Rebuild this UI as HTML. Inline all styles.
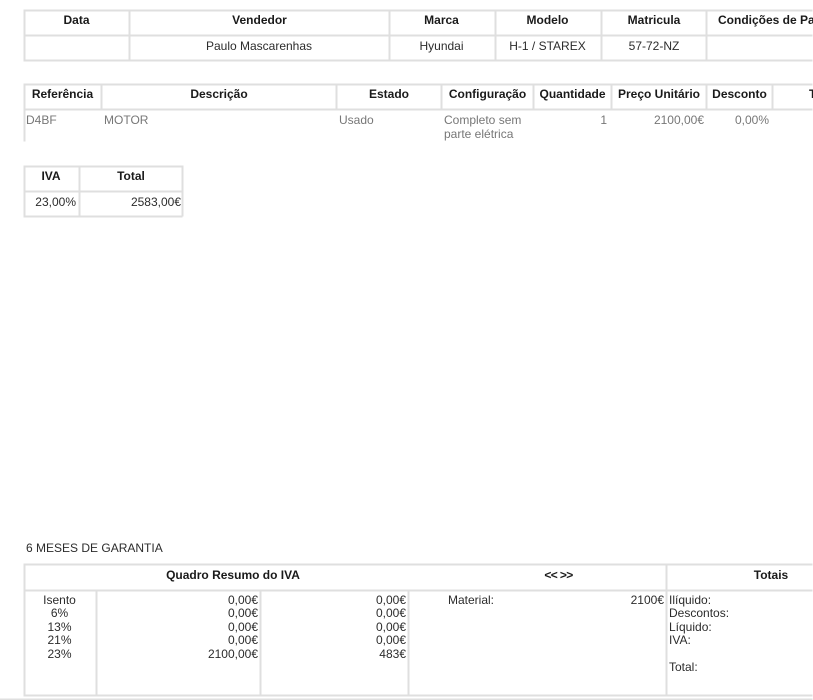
<!DOCTYPE html>
<html>
<head>
<meta charset="utf-8">
<style>
html,body{margin:0;padding:0;background:#fff;width:813px;height:700px;overflow:hidden}
#p{position:relative;width:813px;height:700px;overflow:hidden;font-family:"Liberation Sans",Arial,sans-serif;font-size:12px;color:#2c2c2c;filter:blur(.3px)}
.h,.v{position:absolute;background:#dfdfdf;transform:translate(-.5px,-.5px)}
.h{height:1.5px}
.v{width:1.5px}
.w{width:2px}
.t{position:absolute;white-space:nowrap;line-height:14px}
.b{font-weight:bold;color:#1a1a1a;text-align:center}
.c{text-align:center}
.r{text-align:right}
.g{color:#777}
</style>
</head>
<body>
<div id="p">
<!-- table 1 lines -->
<div class="h" style="left:24px;top:10px;width:789px"></div>
<div class="h" style="left:24px;top:35px;width:789px"></div>
<div class="h" style="left:24px;top:60px;width:789px"></div>
<div class="v" style="left:24px;top:10px;height:51px"></div>
<div class="v" style="left:129px;top:10px;height:51px"></div>
<div class="v" style="left:389px;top:10px;height:51px"></div>
<div class="v" style="left:495px;top:10px;height:51px"></div>
<div class="v" style="left:601px;top:10px;height:51px"></div>
<div class="v" style="left:706px;top:10px;height:51px"></div>
<div class="t b" style="left:24px;width:105px;top:13px">Data</div>
<div class="t b" style="left:130px;width:259px;top:13px">Vendedor</div>
<div class="t b" style="left:389px;width:105px;top:13px">Marca</div>
<div class="t b" style="left:495px;width:105px;top:13px">Modelo</div>
<div class="t b" style="left:602px;width:104px;top:13px">Matricula</div>
<div class="t b" style="left:718px;top:13px">Condições de Pa</div>
<div class="t c" style="left:130px;width:258px;top:39px">Paulo Mascarenhas</div>
<div class="t c" style="left:389px;width:105px;top:39px">Hyundai</div>
<div class="t c" style="left:495px;width:105px;top:39px">H-1 / STAREX</div>
<div class="t c" style="left:602px;width:104px;top:39px">57-72-NZ</div>
<!-- table 2 lines -->
<div class="h" style="left:24px;top:84px;width:789px"></div>
<div class="h" style="left:24px;top:109px;width:789px"></div>
<div class="v" style="left:24px;top:84px;height:58px"></div>
<div class="v" style="left:101px;top:84px;height:26px"></div>
<div class="v" style="left:336px;top:84px;height:26px"></div>
<div class="v" style="left:441px;top:84px;height:26px"></div>
<div class="v" style="left:533px;top:84px;height:26px"></div>
<div class="v" style="left:611px;top:84px;height:26px"></div>
<div class="v" style="left:706px;top:84px;height:26px"></div>
<div class="v" style="left:772px;top:84px;height:26px"></div>
<div class="t b" style="left:25px;width:75px;top:87px">Referência</div>
<div class="t b" style="left:102px;width:234px;top:87px">Descrição</div>
<div class="t b" style="left:337px;width:104px;top:87px">Estado</div>
<div class="t b" style="left:442px;width:91px;top:87px">Configuração</div>
<div class="t b" style="left:534px;width:77px;top:87px">Quantidade</div>
<div class="t b" style="left:612px;width:94px;top:87px">Preço Unitário</div>
<div class="t b" style="left:707px;width:65px;top:87px">Desconto</div>
<div class="t b" style="left:809px;top:87px">T</div>
<div class="t g" style="left:26px;top:113px">D4BF</div>
<div class="t g" style="left:104px;top:113px">MOTOR</div>
<div class="t g" style="left:339px;top:113px">Usado</div>
<div class="t g" style="left:444px;top:113px">Completo sem<br>parte elétrica</div>
<div class="t g r" style="left:534px;width:73px;top:113px">1</div>
<div class="t g r" style="left:612px;width:92px;top:113px">2100,00€</div>
<div class="t g r" style="left:707px;width:62px;top:113px">0,00%</div>
<!-- table 3 lines -->
<div class="h" style="left:24px;top:166px;width:159px"></div>
<div class="h" style="left:24px;top:191px;width:159px"></div>
<div class="h" style="left:24px;top:216px;width:159px"></div>
<div class="v" style="left:24px;top:166px;height:51px"></div>
<div class="v" style="left:79px;top:166px;height:51px"></div>
<div class="v" style="left:182px;top:166px;height:51px"></div>
<div class="t b" style="left:24px;width:54px;top:169px">IVA</div>
<div class="t b" style="left:80px;width:102px;top:169px">Total</div>
<div class="t r" style="left:25px;width:51px;top:195px">23,00%</div>
<div class="t r" style="left:80px;width:101px;top:195px">2583,00€</div>
<!-- footer -->
<div class="t" style="left:26px;top:541px">6 MESES DE GARANTIA</div>
<div class="h" style="left:24px;top:564px;width:789px;height:2px"></div>
<div class="h" style="left:24px;top:590px;width:789px;height:2px"></div>
<div class="h" style="left:24px;top:695px;width:789px;height:2px"></div>
<div class="h" style="left:0;top:699px;width:813px"></div>
<div class="v w" style="left:24px;top:564px;height:132px"></div>
<div class="v w" style="left:95.5px;top:590px;height:106px"></div>
<div class="v w" style="left:259.5px;top:590px;height:106px"></div>
<div class="v w" style="left:407.5px;top:590px;height:106px"></div>
<div class="v w" style="left:666px;top:564px;height:132px"></div>
<div class="t b" style="left:24px;width:418px;top:568px">Quadro Resumo do IVA</div>
<div class="t b" style="left:452px;width:213px;letter-spacing:-.6px;top:568px">&lt;&lt; &gt;&gt;</div>
<div class="t b" style="left:667px;width:208px;top:568px">Totais</div>
<div class="t c" style="left:24px;width:71px;top:594px;line-height:13.4px">Isento<br>6%<br>13%<br>21%<br>23%</div>
<div class="t r" style="left:97px;width:161px;top:594px;line-height:13.4px">0,00€<br>0,00€<br>0,00€<br>0,00€<br>2100,00€</div>
<div class="t r" style="left:261px;width:145px;top:594px;line-height:13.4px">0,00€<br>0,00€<br>0,00€<br>0,00€<br>483€</div>
<div class="t" style="left:448px;top:594px;line-height:13.4px">Material:</div>
<div class="t r" style="left:600px;width:64px;top:594px;line-height:13.4px">2100€</div>
<div class="t" style="left:669px;top:594px;line-height:13.4px">Ilíquido:<br>Descontos:<br>Líquido:<br>IVA:<br><br>Total:</div>
</div>
</body>
</html>
